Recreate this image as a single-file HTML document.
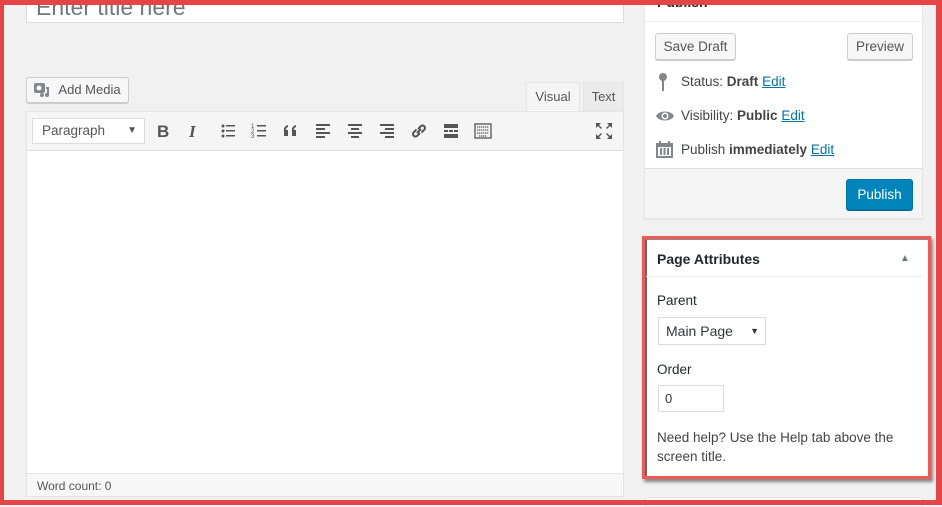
<!DOCTYPE html>
<html><head><meta charset="utf-8"><style>
*{box-sizing:border-box;margin:0;padding:0}
body{width:942px;height:505px;overflow:hidden;background:#f1f1f1;font-family:"Liberation Sans",sans-serif;font-size:13px;color:#444;position:relative}
.a{position:absolute}
.btn{position:absolute;background:#f7f7f7;border:1px solid #ccc;border-radius:3px;box-shadow:0 1px 0 #ccc;color:#555;font-size:13px;text-align:center}
a{color:#0073aa;text-decoration:underline}
.ic{position:absolute;top:121px;width:20px;height:20px}
</style></head><body>
<div class="a" style="left:26px;top:-20px;width:598px;height:43px;background:#fff;border:1px solid #ddd"></div>
<div class="a" style="left:36px;top:-6px;font-size:23px;color:#72777c">Enter title here</div>
<div class="btn" style="left:26px;top:77px;width:103px;height:26px;line-height:24px;padding-left:24px">Add Media</div>
<svg class="a" style="left:33px;top:82px" width="18" height="16" viewBox="0 0 18 16"><rect x="1" y="1" width="11" height="10" rx="2" fill="#82878c"/><circle cx="6" cy="6" r="2.5" fill="#f7f7f7"/><path d="M13 5h3v8a2 2 0 1 1-2-2V7h-1z" fill="#82878c"/><circle cx="9" cy="13" r="2" fill="#82878c"/></svg>
<div class="a" style="left:526px;top:82px;width:54px;height:30px;background:#f5f5f5;border:1px solid #e5e5e5;border-bottom:none;text-align:center;line-height:28px;color:#555">Visual</div>
<div class="a" style="left:583px;top:82px;width:41px;height:29px;background:#ebebeb;border:1px solid #e5e5e5;border-bottom:none;text-align:center;line-height:28px;color:#555">Text</div>
<div class="a" style="left:26px;top:111px;width:598px;height:386px;border:1px solid #e5e5e5;background:#fff"></div>
<div class="a" style="left:27px;top:112px;width:596px;height:39px;background:#f5f5f5;border-bottom:1px solid #ddd"></div>
<div class="a" style="left:32px;top:118px;width:113px;height:26px;background:#fff;border:1px solid #ddd;line-height:24px;padding-left:9px;color:#555;font-size:13.5px">Paragraph<span style="position:absolute;right:7px;font-size:10px">▼</span></div>
<div class="a" style="left:157px;top:122px;font-weight:bold;font-size:17px;color:#555">B</div>
<div class="a" style="left:189px;top:122px;font-weight:bold;font-style:italic;font-size:17px;color:#555;font-family:'Liberation Serif',serif">I</div>
<svg class="ic" style="left:218px" viewBox="0 0 20 20" fill="#555"><circle cx="5" cy="5" r="1.5"/><circle cx="5" cy="10" r="1.5"/><circle cx="5" cy="15" r="1.5"/><rect x="8" y="4" width="9" height="1.5"/><rect x="8" y="9" width="9" height="1.5"/><rect x="8" y="14" width="9" height="1.5"/></svg>
<svg class="ic" style="left:249px" viewBox="0 0 20 20" fill="#555"><text x="2" y="7" font-size="6">1</text><text x="2" y="12" font-size="6">2</text><text x="2" y="17" font-size="6">3</text><rect x="8" y="4" width="9" height="1.5"/><rect x="8" y="9" width="9" height="1.5"/><rect x="8" y="14" width="9" height="1.5"/></svg>
<svg class="ic" style="left:281px" viewBox="0 0 20 20" fill="#555"><path d="M3 10a5 5 0 0 1 4-6v2a3 3 0 0 0-2 3h2v6H3zM11 10a5 5 0 0 1 4-6v2a3 3 0 0 0-2 3h2v6h-4z"/></svg>
<svg class="ic" style="left:313px" viewBox="0 0 20 20" fill="#555"><rect x="3" y="3" width="14" height="2"/><rect x="3" y="7" width="9" height="2"/><rect x="3" y="11" width="14" height="2"/><rect x="3" y="15" width="9" height="2"/></svg>
<svg class="ic" style="left:345px" viewBox="0 0 20 20" fill="#555"><rect x="3" y="3" width="14" height="2"/><rect x="6" y="7" width="8" height="2"/><rect x="3" y="11" width="14" height="2"/><rect x="6" y="15" width="8" height="2"/></svg>
<svg class="ic" style="left:377px" viewBox="0 0 20 20" fill="#555"><rect x="3" y="3" width="14" height="2"/><rect x="8" y="7" width="9" height="2"/><rect x="3" y="11" width="14" height="2"/><rect x="8" y="15" width="9" height="2"/></svg>
<svg class="ic" style="left:409px" viewBox="0 0 20 20" fill="none" stroke="#555" stroke-width="2"><path d="M9 8l3-3a2.5 2.5 0 0 1 3.5 3.5l-3 3M11 12l-3 3a2.5 2.5 0 0 1-3.5-3.5l3-3M8 12l4-4"/></svg>
<svg class="ic" style="left:441px" viewBox="0 0 20 20" fill="#555"><rect x="3" y="3" width="14" height="4"/><rect x="3" y="9" width="4" height="2"/><rect x="8" y="9" width="4" height="2"/><rect x="13" y="9" width="4" height="2"/><rect x="3" y="13" width="14" height="4"/></svg>
<svg class="ic" style="left:473px" viewBox="0 0 20 20" fill="none" stroke="#555" stroke-width="1.3"><rect x="2" y="3" width="16" height="14"/><path d="M4 6h12M4 9h12M4 12h12M6 15h8" stroke-dasharray="1.3 .7"/></svg>
<svg class="ic" style="left:594px" viewBox="0 0 20 20" fill="#555"><path d="M2 2h5l-2 2 3 3-1 1-3-3-2 2zM18 2v5l-2-2-3 3-1-1 3-3-2-2zM2 18v-5l2 2 3-3 1 1-3 3 2 2zM18 18h-5l2-2-3-3 1-1 3 3 2-2z"/></svg>
<div class="a" style="left:27px;top:473px;width:596px;height:23px;background:#f7f7f7;border-top:1px solid #e5e5e5;padding:5px 10px;font-size:12px;color:#555">Word count: 0</div>
<div class="a" style="left:644px;top:-20px;width:279px;height:239px;background:#fff;border:1px solid #e5e5e5;box-shadow:0 1px 1px rgba(0,0,0,.04)"></div>
<div class="a" style="left:657px;top:-6px;font-weight:bold;font-size:14px;color:#23282d">Publish</div>
<div class="a" style="left:645px;top:21px;width:277px;height:1px;background:#eee"></div>
<div class="btn" style="left:655px;top:33px;width:81px;height:27px;line-height:25px;font-size:13.5px">Save Draft</div>
<div class="btn" style="left:847px;top:33px;width:66px;height:27px;line-height:25px;font-size:13.5px">Preview</div>
<svg class="a" style="left:657px;top:72px" width="12" height="20" viewBox="0 0 12 20"><circle cx="6" cy="5" r="4" fill="#82878c"/><rect x="5" y="7" width="2" height="12" fill="#82878c"/></svg>
<div class="a" style="left:681px;top:74px;font-size:13.5px">Status: <b>Draft</b> <a>Edit</a></div>
<svg class="a" style="left:655px;top:109px" width="20" height="14" viewBox="0 0 20 14"><path d="M1 7C4 1 16 1 19 7 16 13 4 13 1 7z" fill="#82878c"/><circle cx="10" cy="7" r="3.5" fill="#fff"/><circle cx="10" cy="7" r="2" fill="#82878c"/></svg>
<div class="a" style="left:681px;top:108px;font-size:13.5px">Visibility: <b>Public</b> <a>Edit</a></div>
<svg class="a" style="left:656px;top:141px" width="17" height="17" viewBox="0 0 17 17" fill="#82878c"><rect x="0" y="2" width="17" height="15"/><rect x="2" y="6" width="13" height="9" fill="#fff"/><rect x="4" y="7" width="2" height="7"/><rect x="7.5" y="7" width="2" height="7"/><rect x="11" y="7" width="2" height="7"/><rect x="3" y="0" width="2" height="4"/><rect x="12" y="0" width="2" height="4"/></svg>
<div class="a" style="left:681px;top:142px;font-size:13.5px">Publish <b>immediately</b> <a>Edit</a></div>
<div class="a" style="left:645px;top:168px;width:277px;height:50px;background:#f5f5f5;border-top:1px solid #ddd"></div>
<div class="a" style="left:846px;top:179px;width:67px;height:31px;background:#0085ba;border:1px solid #0073aa;border-radius:3px;box-shadow:0 1px 0 #006799;color:#fff;text-align:center;line-height:29px;font-size:13.5px">Publish</div>
<div class="a" style="left:642px;top:236px;width:289px;height:243px;border:3px solid #f05a55;background:#fff;box-shadow:2px 3px 3px rgba(0,0,0,.45)"></div>
<div class="a" style="left:645px;top:239px;width:2px;height:237px;background:#666"></div>
<div class="a" style="left:645px;top:239px;width:283px;height:1px;background:#888"></div>
<div class="a" style="left:646px;top:276px;width:276px;height:1px;background:#eee"></div>
<div class="a" style="left:657px;top:251px;font-weight:bold;font-size:14px;color:#23282d">Page Attributes</div>
<div class="a" style="left:900px;top:253px;font-size:10px;color:#72777c">▲</div>
<div class="a" style="left:657px;top:293px;color:#23282d;font-size:13.5px">Parent</div>
<div class="a" style="left:658px;top:317px;width:108px;height:28px;border:1px solid #ddd;line-height:26px;padding-left:7px;color:#32373c;font-size:14px">Main Page<span style="position:absolute;right:6px;font-size:9px">▼</span></div>
<div class="a" style="left:657px;top:362px;color:#23282d;font-size:13.5px">Order</div>
<div class="a" style="left:658px;top:385px;width:66px;height:27px;border:1px solid #ddd;line-height:25px;padding-left:6px;color:#32373c">0</div>
<div class="a" style="left:657px;top:428px;width:260px;line-height:19px;color:#444;font-size:13.5px">Need help? Use the Help tab above the screen title.</div>
<div class="a" style="left:645px;top:497px;width:278px;height:10px;background:#fff;border:1px solid #e5e5e5"></div>
<div class="a" style="left:0;top:0;width:942px;height:5px;background:#e64548"></div>
<div class="a" style="left:0;top:0;width:4px;height:505px;background:#e64548"></div>
<div class="a" style="left:936px;top:0;width:6px;height:505px;background:#e64548"></div>
<div class="a" style="left:0;top:500px;width:942px;height:5px;background:#e64548"></div>
</body></html>
